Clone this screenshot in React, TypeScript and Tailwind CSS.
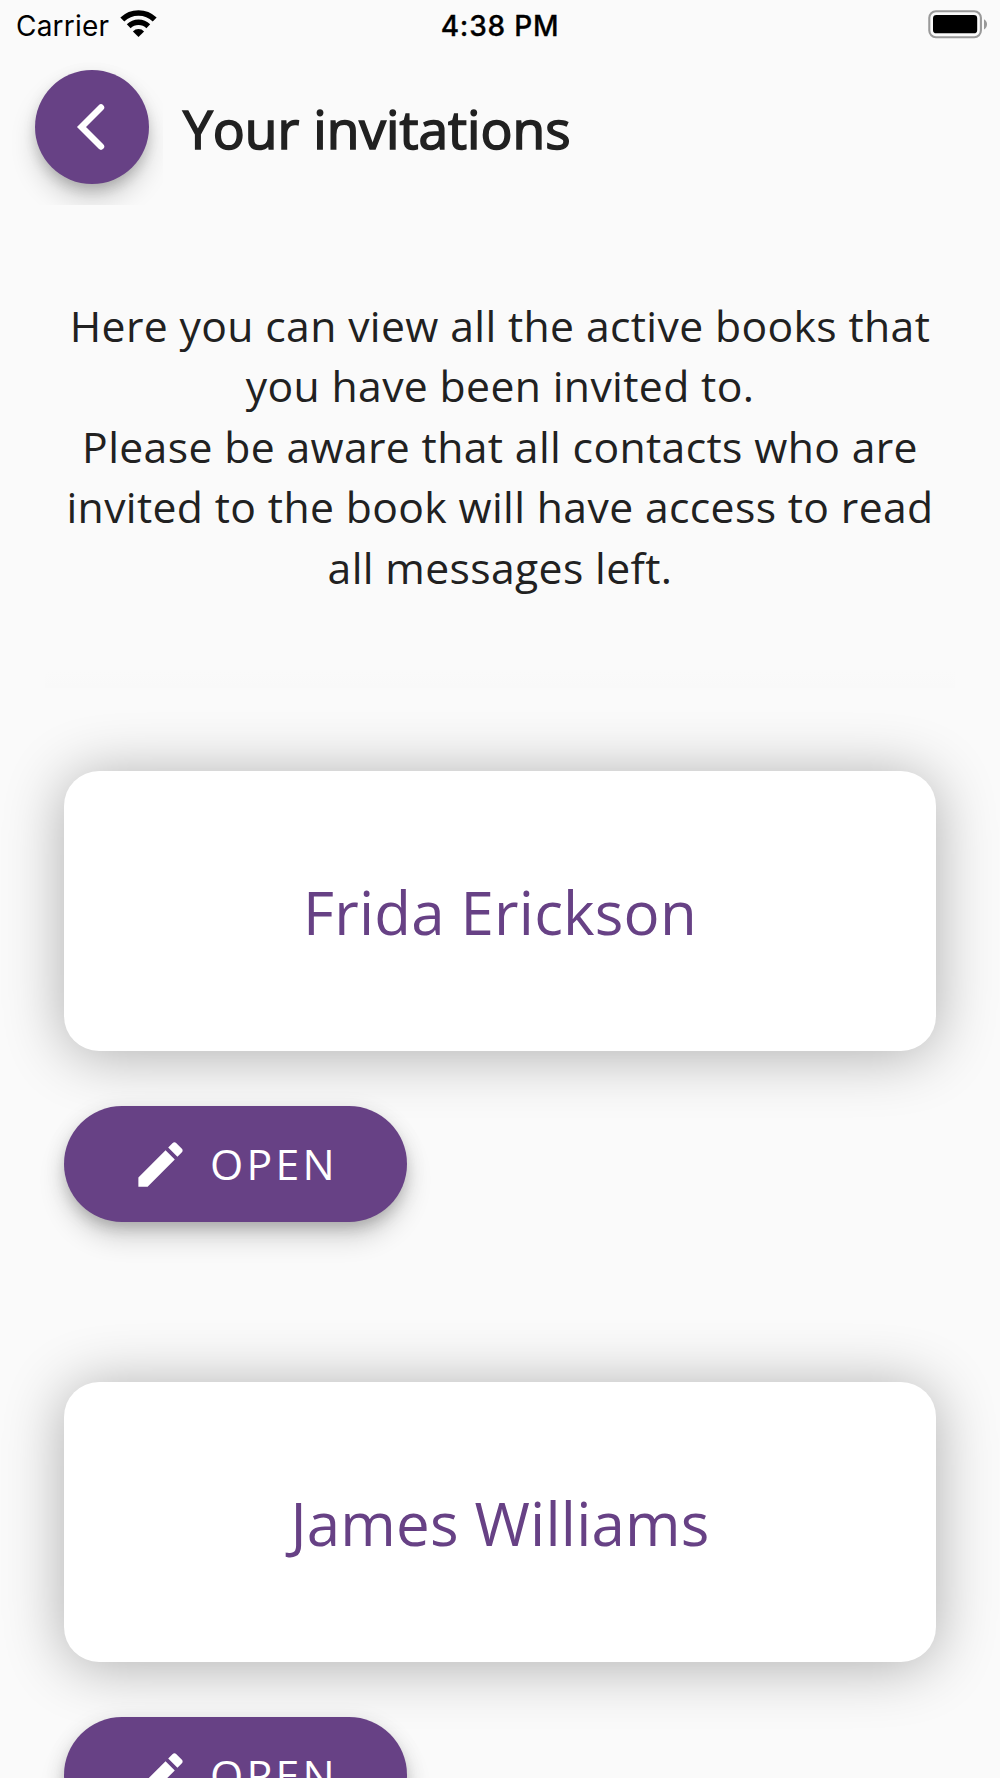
interface InvitationProps {
  name: string;
}

const invitations = [
  { id: 1, name: "Frida Erickson" },
  { id: 2, name: "James Williams" },
];

function WifiIcon() {
  return (
    <svg className="ml-[11px] mt-[10px] h-[27px] w-[37px]" viewBox="0 0 37 27">
      <path d="M2.3 9.6A23.2 23.2 0 0 1 34.7 9.6" fill="none" stroke="#000" strokeWidth="5.6" />
      <path d="M8.7 16.2A14 14 0 0 1 28.3 16.2" fill="none" stroke="#000" strokeWidth="5.4" />
      <path d="M18.5 27L12.9 21.4A8 8 0 0 1 24.1 21.4Z" fill="#000" />
    </svg>
  );
}

function BatteryIcon() {
  return (
    <svg className="ml-auto mt-[10px] h-[29px] w-[60px]" viewBox="0 0 60 29">
      <rect x="1.3" y="1.2" width="51.6" height="26" rx="6.6" fill="none" stroke="#999" strokeWidth="2.1" />
      <rect x="5" y="5" width="44.2" height="18.3" rx="3.4" fill="#000" />
      <path d="M56 9.2C60 11.4 60 17.2 56 19.4Z" fill="#999" />
    </svg>
  );
}

function StatusBar() {
  return (
    <div className="grid h-[50px] grid-cols-3 font-[Inter,sans-serif] text-[28px] leading-[52px] text-black">
      <div className="flex pl-[16px]">
        <span className="tracking-[0.2px]">Carrier</span>
        <WifiIcon />
      </div>
      <span className="text-center font-medium tracking-[0.8px] [-webkit-text-stroke:0.3px_#000]">4:38 PM</span>
      <div className="flex pr-[12px]">
        <BatteryIcon />
      </div>
    </div>
  );
}

function Header() {
  return (
    <header className="flex h-[155px]">
      <div className="w-[163px] overflow-hidden pl-[35px] pt-[20px]">
        <button className="flex size-[114px] items-center justify-center rounded-full bg-[#674185] shadow-[0_8px_13px_-3px_rgba(0,0,0,0.16),0_16px_27px_-1px_rgba(0,0,0,0.18),0_3px_16px_0_rgba(0,0,0,0.06)]">
          <svg className="mr-[1px] size-[48px]" viewBox="0 0 48 48" fill="none" stroke="#fff">
            <path d="M33 4.5L13.5 24L33 43.5" strokeWidth="6.4" strokeLinecap="round" />
          </svg>
        </button>
      </div>
      <h1 className="ml-[20px] mt-[39px] text-[53.3px] leading-[80px] [-webkit-text-stroke:1.6px_#212121]">
        Your invitations
      </h1>
    </header>
  );
}

function Invitation({ name }: InvitationProps) {
  return (
    <section className="h-[611px] px-[64px]">
      <div className="flex h-[280px] items-center justify-center rounded-[35px] bg-white pt-px text-[60px] tracking-[0.2px] text-[#674185] shadow-[0_4px_60px_0_rgba(0,0,0,0.31)]">
        {name}
      </div>
      <button className="relative mt-[55px] flex h-[116px] w-[343px] items-center rounded-full bg-[#674185] pl-[67px] text-white shadow-[0_8px_13px_-3px_rgba(0,0,0,0.16),0_16px_27px_0_rgba(0,0,0,0.16),0_3px_22px_0_rgba(0,0,0,0.08)]">
        <svg className="size-[59px]" viewBox="0 0 24 24" fill="currentColor">
          <path d="M3 17.25V21h3.75L17.81 9.94l-3.75-3.75L3 17.25zM20.71 7.04c.39-.39.39-1.02 0-1.41l-2.34-2.34c-.39-.39-1.02-.39-1.41 0l-1.83 1.83 3.75 3.75 1.83-1.83z" />
        </svg>
        <span className="ml-[20px] text-[42.7px] tracking-[3.3px]">OPEN</span>
      </button>
    </section>
  );
}

export default function App() {
  return (
    <div className="h-[1778px] w-[1000px] overflow-hidden bg-[#fafafa] font-['Open_Sans',sans-serif] text-[#212121]">
      <StatusBar />
      <Header />
      <div className="flex h-[483px] flex-col justify-between pt-[91px]">
        <p className="text-center text-[42.7px] leading-[60.4px] tracking-[0.36px]">
          Here you can view all the active books that
          <br />
          you have been invited to.
          <br />
          Please be aware that all contacts who are
          <br />
          invited to the book will have access to read
          <br />
          all messages left.
        </p>
        {/* soft edge above the list */}
        <div className="mx-[45px] h-[18px] bg-linear-to-b from-[#fafafa] to-[#f9f9f9]" />
      </div>
      <main className="pt-[83px]">
        {invitations.map((item) => (
          <Invitation key={item.id} name={item.name} />
        ))}
      </main>
    </div>
  );
}
